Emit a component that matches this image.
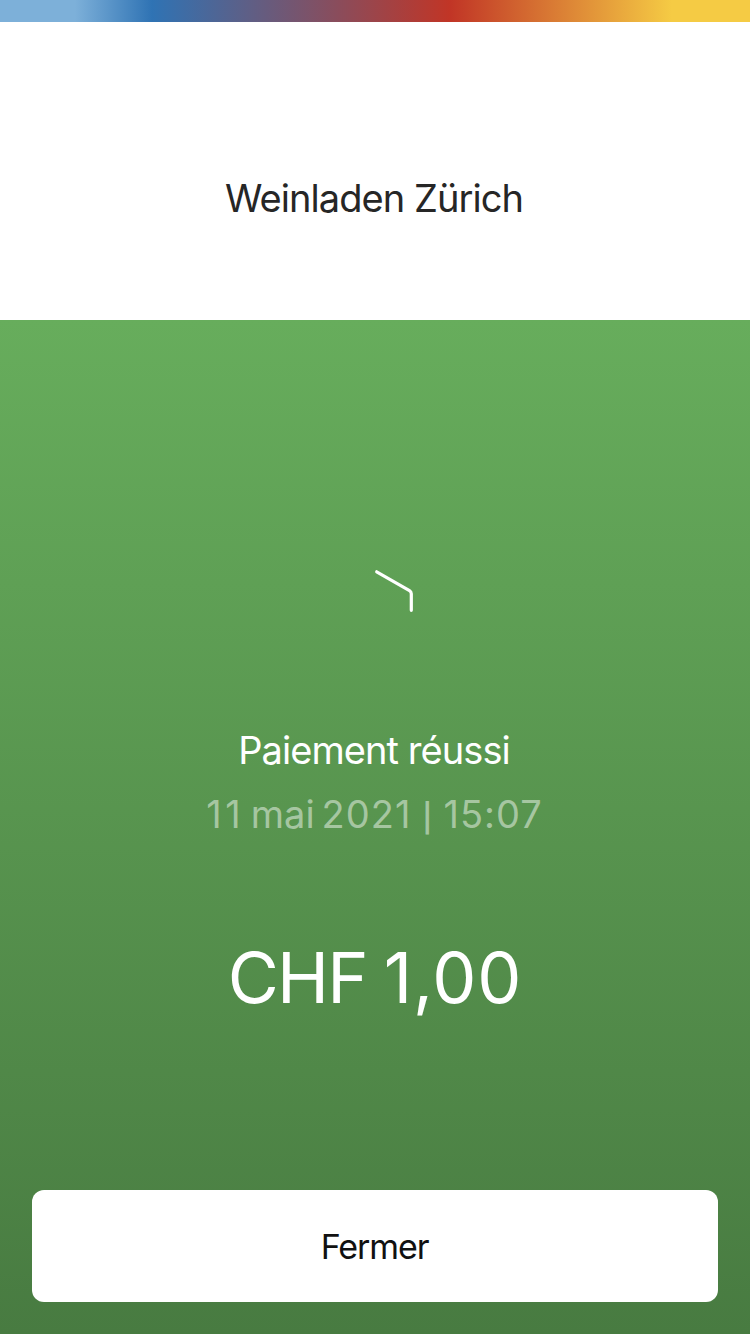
<main class="screen">
  <div class="stripe"></div>
  <header><h1>Weinladen Zürich</h1></header>
  <section>
    <svg class="mark" viewBox="0 0 80 90" width="80" height="90" fill="none" stroke="#fff" stroke-width="3.2" stroke-linecap="round" stroke-linejoin="round" aria-hidden="true">
      <path d="M41.7 6.8 L74.5 25.6 Q76.3 26.7 76.3 28.8 V45.3" />
    </svg>
    <p class="status">Paiement réussi</p>
    <p class="date"><span class="day">11</span> <span>mai</span> <span class="year">2021</span> <span class="bar">|</span> <span class="time">15:07</span></p>
    <p class="amount"><span class="currency">CHF</span> <span class="value">1,00</span></p>
    <button>Fermer</button>
  </section>
</main>

<style>
  .screen { width: 750px; height: 1334px; display: flex; flex-direction: column; font-family: Inter, "Liberation Sans", sans-serif; background: #fff; overflow: hidden; }
  .stripe { height: 22px; flex: none; background: linear-gradient(90deg, #7db0d9 0, #7db0d9 75px, #2f73b4 152px, #c13526 450px, #f5cb44 672px, #f5cb44 750px); }
  header { height: 298px; flex: none; display: flex; justify-content: center; padding-top: 152px; box-sizing: border-box; }
  h1 { margin: 0; padding-right: 2px; font-size: 38px; font-weight: 400; line-height: 48px; letter-spacing: -0.93px; color: #262626; white-space: nowrap; }
  section { flex: 1; display: flex; flex-direction: column; align-items: center; background: linear-gradient(#67ad5c, #487b41); color: #fff; padding: 245px 32px 32px; box-sizing: border-box; }
  .mark { flex: none; display: block; }
  p { margin: 0; white-space: nowrap; flex: none; }
  .status { margin-top: 71px; padding-right: 2px; font-size: 38px; line-height: 48px; letter-spacing: -0.93px; }
  .date { display: flex; align-items: baseline; margin-top: 16px; padding-right: 1px; font-size: 38px; line-height: 48px; color: rgba(255,255,255,.48); }
  .day { letter-spacing: 3.5px; margin-right: 6.5px; }
  .year { letter-spacing: 1px; margin-left: 7px; }
  .bar { font-size: 28px; font-weight: 600; margin: 0 11px 0 11px; }
  .time { letter-spacing: 1px; }
  .amount { display: flex; align-items: baseline; gap: 17px; margin-top: 91px; font-size: 70px; line-height: 90px; }
  .currency { letter-spacing: -1.8px; }
  .value { letter-spacing: 0.8px; }
  button { margin-top: auto; flex: none; width: 686px; height: 112px; border: 0; border-radius: 12px; background: #fff; color: #111; font: 400 34px Inter, "Liberation Sans", sans-serif; letter-spacing: -1.1px; padding: 0 1px 0 0; }
</style>
